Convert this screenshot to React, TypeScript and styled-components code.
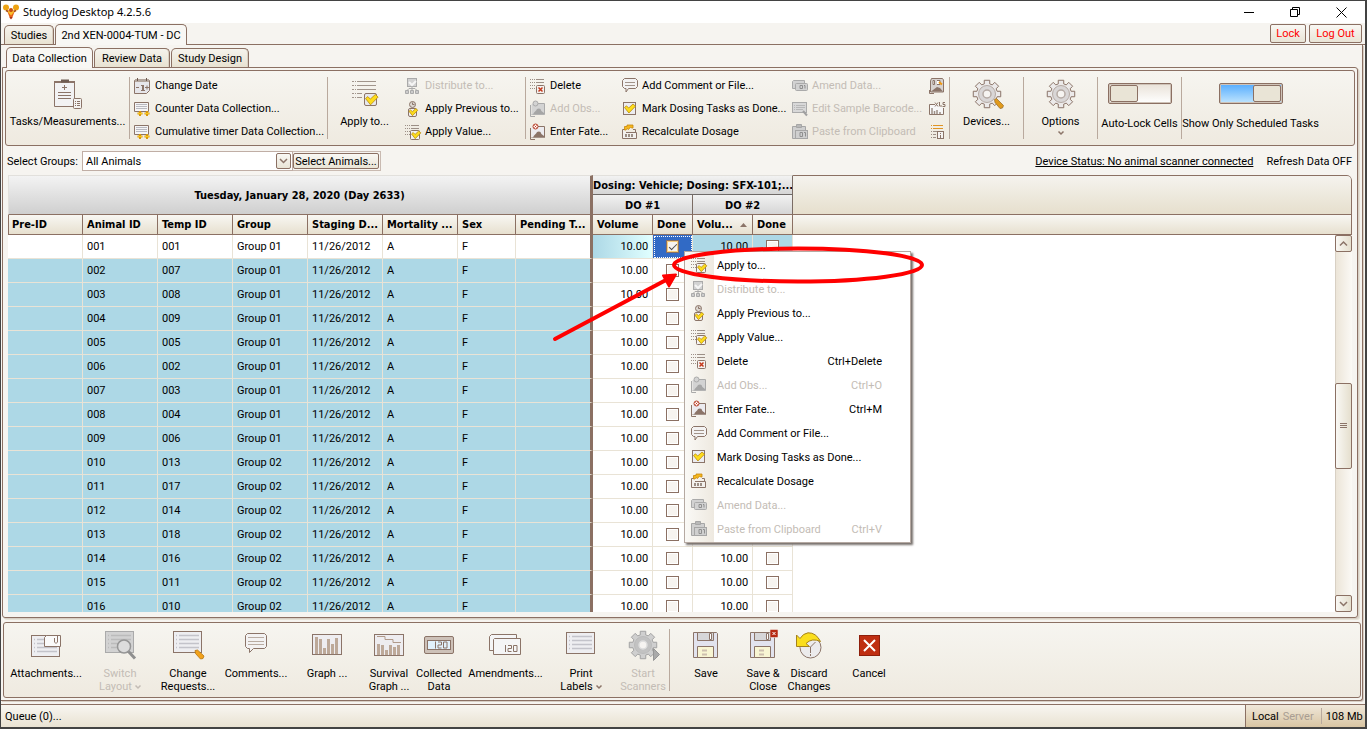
import React from "react";
import styled, { createGlobalStyle, css } from "styled-components";

const BROWN = "#8b7063";
const LINE = "#b9a99d";
const MUTED = "#c3bcb5";
const FONT = '"DejaVu Sans Condensed", "DejaVu Sans", sans-serif';
const UI = 'Roboto, "Liberation Sans", sans-serif';

const GlobalStyle = createGlobalStyle`
  *, *::before, *::after { box-sizing: border-box; }
  body { margin: 0; background: #f6f4f0; font: 11px/13px ${UI}; color: #000; }
  button, select, input { font: inherit; color: inherit; margin: 0; padding: 0; }
  button { border: 0; background: none; white-space: nowrap; }
  svg { display: block; flex: none; overflow: visible; }
`;

/* ---------- window chrome ---------- */
const Window = styled.div`
  display: flex;
  flex-direction: column;
  height: 100vh;
  border: solid #434343;
  border-width: 1px 2px 2px 1px;
  background: #f6f4f0;
  overflow: hidden;
`;
const TitleBar = styled.header`
  display: flex;
  align-items: center;
  height: 22px;
  flex: none;
  padding: 0 1px 0 2px;
  gap: 4px;
  background: #fff;
  font: 11px/16px "Noto Sans", "Open Sans", sans-serif;
`;
const AppTitle = styled.h1`
  flex: 1;
  margin: 0;
  font: inherit;
`;
const WindowControls = styled.div`
  display: flex;
`;
const WindowButton = styled.button`
  display: flex;
  align-items: center;
  justify-content: center;
  width: 46px;
  height: 20px;
`;
const TabRow = styled.nav<{ $inner?: boolean }>`
  display: flex;
  align-items: flex-end;
  flex: none;
  gap: 1px;
  height: 22px;
  padding: 0 3px;
  border-bottom: ${(p) => (p.$inner ? "0" : `1px solid ${BROWN}`)};
  ${(p) => p.$inner && css`padding-left: 5px;`}
`;
const Tab = styled.button<{ $active?: boolean; $w: number }>`
  position: relative;
  z-index: 1;
  width: ${(p) => p.$w}px;
  height: ${(p) => (p.$active ? 21 : 19)}px;
  margin-bottom: ${(p) => (p.$active ? -1 : 0)}px;
  border: 1px solid ${BROWN};
  border-bottom: 0;
  border-radius: 5px 5px 0 0;
  background: ${(p) => (p.$active ? "#f8f7f4" : "linear-gradient(#f5f3ed, #e8e2d2)")};
  box-shadow: ${(p) => (p.$active ? "none" : "inset -1px 0 0 #d9d0c2")};
`;
const SessionButtons = styled.div`
  display: flex;
  gap: 3px;
  margin-left: auto;
  padding-bottom: 1px;
`;
const FramedButton = styled.button<{ $w: number; $red?: boolean }>`
  width: ${(p) => p.$w}px;
  height: ${(p) => (p.$red ? 19 : 16)}px;
  border: 1px solid ${BROWN};
  border-radius: 2px;
  background: linear-gradient(#f9f8f4, #e9e4d6);
  color: ${(p) => (p.$red ? "#f00" : "#000")};
`;
const OuterFrame = styled.main`
  display: flex;
  flex-direction: column;
  flex: 1;
  min-height: 0;
  margin-right: 2px;
  border: solid ${BROWN};
  border-width: 0 1px 1px 0;
  border-radius: 0 0 3px 0;
  box-shadow: 1px 1px 0 #d8cfc5;
`;
const InnerFrame = styled.section`
  display: flex;
  flex-direction: column;
  flex: 1;
  min-height: 0;
  margin: 0 4px 0 1px;
  padding: 2px;
  border: 1px solid ${BROWN};
  border-radius: 0 3px 3px 3px;
  box-shadow: 1px 1px 0 #d8cfc5, 2px 2px 0 #e6e2d6;
`;
const panel = css`
  display: flex;
  flex: none;
  height: 76px;
  border: 1px solid ${BROWN};
  border-radius: 3px;
  background: linear-gradient(#f6f5f0, #efeae0);
  overflow: hidden;
`;
const Ribbon = styled.div`${panel}`;
const ActionBar = styled.div`
  ${panel}
  margin: 4px 1px 2px 2px;
`;
const Separator = styled.div`
  flex: none;
  width: 1px;
  margin: 6px 0;
  background: ${LINE};
`;

/* ---------- ribbon ---------- */
const CommandList = styled.div<{ $w: number }>`
  flex: none;
  width: ${(p) => p.$w}px;
  padding: 3px 0 0 4px;
`;
const Command = styled.button`
  display: flex;
  align-items: center;
  gap: 4px;
  height: 23px;
  &:disabled { color: ${MUTED}; }
`;
const BigCommand = styled.button<{ $w: number; $top: number }>`
  display: flex;
  flex-direction: column;
  align-items: center;
  flex: none;
  width: ${(p) => p.$w}px;
  padding-top: ${(p) => p.$top}px;
  &:disabled { color: ${MUTED}; }
`;
const IconBox = styled.span<{ $h: number }>`
  display: flex;
  align-items: center;
  justify-content: center;
  flex: none;
  height: ${(p) => p.$h}px;
  padding-bottom: ${(p) => (p.$h > 20 ? 5 : 0)}px;
`;
const ToggleField = styled.label<{ $w: number }>`
  display: flex;
  flex-direction: column;
  align-items: center;
  gap: 13px;
  flex: none;
  width: ${(p) => p.$w}px;
  padding-top: 12px;
  white-space: nowrap;
`;
const Toggle = styled.input`
  appearance: none;
  display: flex;
  width: 64px;
  height: 21px;
  padding: 1px;
  border: 1px solid ${BROWN};
  border-radius: 2px;
  background: linear-gradient(#e9e2d8, #fff);
  box-shadow: inset 0 0 0 1px #cfc3b8;
  &::before {
    content: "";
    width: 28px;
    height: 17px;
    border: 1px solid ${BROWN};
    border-radius: 2px;
    background: #e9e4d6;
  }
  &:checked {
    justify-content: flex-end;
    background: linear-gradient(#56adff, #bfe4fd);
  }
`;

/* ---------- filter line ---------- */
const FilterRow = styled.div`
  display: flex;
  align-items: center;
  flex: none;
  height: 20px;
  margin-top: 5px;
  padding: 0 3px 0 2px;
`;
const FilterLabel = styled.label`
  width: 75px;
`;
const SelectBox = styled.div`
  display: grid;
  grid-template-columns: 1fr 16px;
  align-items: center;
  width: 211px;
  height: 20px;
  border: 1px solid #c0aea5;
  background: #fff;
`;
const GroupSelect = styled.select`
  grid-area: 1 / 1 / 2 / 3;
  appearance: none;
  height: 18px;
  padding-left: 3px;
  border: 0;
  background: none;
  outline: 0;
`;
const DropArrow = styled.span`
  grid-area: 1 / 2;
  display: flex;
  align-items: center;
  justify-content: center;
  width: 15px;
  height: 16px;
  border: 1px solid ${BROWN};
  border-radius: 2px;
  background: linear-gradient(#f9f8f4, #e9e4d6);
  pointer-events: none;
`;
const ButtonHalo = styled.div`
  display: flex;
  align-items: center;
  height: 20px;
  padding-right: 1px;
  border: 1px solid #c9bab1;
  border-left: 0;
`;
const DeviceLink = styled.a`
  margin-left: auto;
  margin-right: 13px;
  color: #000;
`;

/* ---------- data grid ---------- */
const GridArea = styled.div`
  position: relative;
  display: grid;
  grid-template: 60px minmax(0, 1fr) / minmax(0, 1fr) 17px;
  flex: 1;
  min-height: 0;
  margin: 4px 3px 3px;
`;
const TableClip = styled.div`
  grid-area: 1 / 1 / 3 / 3;
  overflow: hidden;
  background: #fff;
  border-radius: 0 5px 0 0;
`;
const Table = styled.table`
  width: 100%;
  table-layout: fixed;
  border-collapse: separate;
  border-spacing: 0;
`;
const bandHead = css`
  height: 20px;
  padding: 1px 0 0;
  font: bold 11px/13px ${FONT};
  white-space: nowrap;
  overflow: hidden;
`;
const DateHead = styled.th`
  ${bandHead}
  border: solid #e2e0dc;
  border-width: 1px 0 0 1px;
  border-right: 3px solid ${BROWN};
  border-bottom: 1px solid ${BROWN};
  background: linear-gradient(#f3f3f3, #cfcfcf);
`;
const BandHead = styled.th<{ $sub?: boolean }>`
  ${bandHead}
  border: 0 solid #7b6c64;
  border-right: 1px solid #7b6c64;
  border-bottom: 1px solid ${(p) => (p.$sub ? BROWN : "#6f6a68")};
  border-top: ${(p) => (p.$sub ? "0" : "1px solid #e2e0dc")};
  background: linear-gradient(#f2f2f2, #d5d5d5);
`;
const FillerHead = styled.th`
  border: 1px solid ${BROWN};
  border-left: 0;
  border-radius: 0 5px 0 0;
  background: linear-gradient(#f5f3ee, #e6dfcd);
`;
const ColumnHead = styled.th<{ $first?: boolean; $thick?: boolean }>`
  height: 20px;
  padding: 0 0 0 ${(p) => (p.$first ? 3 : 4)}px;
  border: solid ${BROWN};
  border-width: 0 ${(p) => (p.$thick ? 3 : 1)}px 1px ${(p) => (p.$first ? 1 : 0)}px;
  background: linear-gradient(#f8f7f3, #e7e0cf);
  font: bold 11px/13px ${FONT};
  text-align: left;
  white-space: nowrap;
  overflow: hidden;
`;
const HeadLabel = styled.span`
  display: flex;
  align-items: center;
  justify-content: space-between;
  padding-right: 5px;
`;
type CellTone = "white" | "blue" | "fade" | "focus";
const TONES: Record<CellTone, string> = {
  white: "#fff",
  blue: "#add8e6",
  fade: "linear-gradient(90deg, #add8e6, #e0ffff)",
  focus: "#316ac5",
};
const Cell = styled.td<{ $tone: CellTone; $align?: string; $thick?: boolean }>`
  height: 24px;
  padding: 0 4px;
  border-bottom: 1px solid #e9e3d6;
  border-right: ${(p) => (p.$thick ? `3px solid ${BROWN}` : "1px solid #e9e3d6")};
  background: ${(p) => TONES[p.$tone]};
  text-align: ${(p) => p.$align ?? "left"};
  white-space: nowrap;
  overflow: hidden;
  ${(p) => p.$tone === "focus" && css`outline: 1px dotted #fff; outline-offset: -2px;`}
`;
const CheckInput = styled.input<{ $focus?: boolean }>`
  appearance: none;
  display: flex;
  align-items: center;
  justify-content: center;
  width: 13px;
  height: 13px;
  margin: 0 auto;
  border: 1px solid ${BROWN};
  background: #f7f4f0;
  box-shadow: ${(p) => (p.$focus ? "inset 0 0 0 1px #f5cf7d" : "inset 0 0 0 1px #fff")};
  &:checked::after {
    content: "";
    width: 8px;
    height: 4px;
    border: solid #4c4a48;
    border-width: 0 0 1px 1px;
    transform: rotate(-45deg);
    margin-bottom: 2px;
  }
`;
const ScrollBar = styled.div`
  grid-area: 2 / 2;
  display: flex;
  flex-direction: column;
  border-left: 1px solid #d8d0c4;
  background: linear-gradient(90deg, #ece5d8, #fbf9f5);
`;
const ScrollButton = styled.button<{ $thumb?: boolean }>`
  display: flex;
  align-items: center;
  justify-content: center;
  flex: none;
  width: 17px;
  height: ${(p) => (p.$thumb ? 86 : 17)}px;
  margin-left: -1px;
  border: 1px solid ${BROWN};
  border-radius: 2px;
  background: linear-gradient(90deg, #f9f8f4, #e5dfce);
`;
const Track = styled.div<{ $grow: number }>`
  flex: ${(p) => p.$grow} 0 0;
`;

/* ---------- context menu ---------- */
const Menu = styled.ul`
  position: absolute;
  left: 676px;
  top: 76px;
  width: 227px;
  margin: 0;
  padding: 1px;
  list-style: none;
  border: 1px solid #b5a9a2;
  background: linear-gradient(90deg, #faf9f6, #eee9e0) left / 29px 100% no-repeat, #fff;
  box-shadow: 2px 2px 2px #77706c;
`;
const MenuItem = styled.button`
  display: grid;
  grid-template-columns: 16px 1fr auto;
  align-items: center;
  column-gap: 10px;
  width: 100%;
  height: 24px;
  padding: 0 27px 0 5px;
  text-align: left;
  &:disabled { color: ${MUTED}; }
`;
const Annotation = styled.svg`
  position: absolute;
  left: 540px;
  top: 65px;
  pointer-events: none;
`;

/* ---------- status bar ---------- */
const StatusBar = styled.footer`
  display: flex;
  align-items: center;
  flex: none;
  height: 23px;
  margin-top: 3px;
  padding-left: 4px;
  border-top: 1px solid ${BROWN};
  background: linear-gradient(#f8f6f1, #e9e2d2);
`;
const StatusModes = styled.div`
  display: flex;
  align-items: center;
  align-self: stretch;
  width: 120px;
  margin-left: auto;
  padding-left: 6px;
  gap: 4px;
  border-left: 1px solid ${BROWN};
  background: linear-gradient(#efe7d9, #d9c5a2);
  white-space: nowrap;
`;
const Faded = styled.span`
  width: 34px;
  color: #a99d92;
`;
const StatusDivider = styled.span`
  width: 1px;
  height: 16px;
  background: ${LINE};
`;

/* ---------- icons ---------- */
const S = "#8b7468";
type Off = { off?: boolean };

const Tick = ({ x, y, s = 1 }: { x: number; y: number; s?: number }) => (
  <path
    transform={`translate(${x} ${y}) scale(${s})`}
    d="M0 3.500 L2 1.800 L4.200 4 L8.500 0 L11 2.200 L4.400 9 Z"
    fill="#fddc1c"
    stroke="#b98a10"
    strokeWidth={0.8 / s}
    strokeLinejoin="round"
  />
);
const DottedLines = ({ ys, w, short = [] }: { ys: number[]; w: number; short?: number[] }) => (
  <g stroke="#9c8f86" shapeRendering="crispEdges">
    {ys.map((y) => (
      <React.Fragment key={y}>
        <path d={`M0 ${y}h1M2 ${y}h1M4 ${y}h1`} />
        {!short.includes(y) && <path d={`M6 ${y}H${w}`} />}
      </React.Fragment>
    ))}
  </g>
);
const ApplyIcon = () => (
  <svg width="16" height="16">
    <DottedLines ys={[1.5, 4.5, 7.5, 10.5]} w={14} short={[7.5, 10.5]} />
    <rect x="5.5" y="6.5" width="9" height="9" rx="1" fill="#f3f2f3" stroke={S} />
    <Tick x={6.5} y={7} s={0.85} />
  </svg>
);
const ApplyBigIcon = () => (
  <svg width="26" height="26">
    <g stroke="#a1958c" shapeRendering="crispEdges">
      {[0.5, 4.5, 8.5, 12.5, 16.5].map((y) => (
        <path key={y} d={`M0 ${y}h2M3 ${y}h1M5 ${y}${y < 10 ? "H24" : "H10"}`} />
      ))}
    </g>
    <rect x="12.5" y="12.5" width="12" height="12" rx="1.5" fill="#e7e8ec" stroke={S} />
    <Tick x={13.5} y={13.5} s={1.15} />
  </svg>
);
const DistributeIcon = () => (
  <svg width="16" height="16" stroke="#aaa" fill="#d2d2d2">
    <rect x="2.500" y="0.500" width="9" height="8" />
    <path d="M4 4l3 3 4-4" fill="none" stroke="#f5f5f5" strokeWidth="2" />
    <path d="M7 9v3M2 12.500L4 10.500h6l2 2" fill="none" />
    <path d="M.500 12.500h3v3h-3zM5.500 12.500h3v3h-3zM10.500 12.500h3v3h-3z" fill="#ccc" />
  </svg>
);
const PreviousIcon = () => (
  <svg width="16" height="16">
    <circle cx="7.500" cy="3.500" r="3" fill="#ddd8d2" stroke={S} />
    <path d="M7.500 1.500v2h2" stroke={S} fill="none" />
    <rect x="3.500" y="7.500" width="8" height="8" rx="1.500" fill="#f0eff0" stroke={S} />
    <Tick x={4} y={7.500} s={0.8} />
  </svg>
);
const DeleteIcon = () => (
  <svg width="16" height="16">
    <DottedLines ys={[1.5, 4.5, 7.5, 10.5]} w={14} short={[7.5, 10.5]} />
    <rect x="6.500" y="7.500" width="8" height="8" rx="1" fill="#f4f1ef" stroke={S} />
    <path d="M8.500 9.500l4 4m0-4l-4 4" stroke="#c5391b" strokeWidth="1.500" />
  </svg>
);
const PersonIcon = ({ off }: Off) => {
  const c = off ? "#aaa" : S;
  return (
    <svg width="16" height="16">
      <path d="M3 2.500H14.500V13.500H1.500M.500 4V15.500H5" fill="none" stroke={c} />
      <rect x="1.500" y="3" width="12.500" height="10.500" fill={off ? "#d3d3d3" : "#ecebef"} />
      <path d="M3 13.500c1-3 3-3 4-5.500q2-1 3.500 0 0 2 3.500 4v1.500z" fill={off ? "#a5a5a5" : S} />
      <circle cx="5.500" cy="2.500" r="2.500" fill={off ? "#d3d3d3" : "#fff"} stroke={off ? "#aaa" : "#b53a22"} />
      {!off && <path d="M4.500 1.500l2 2m0-2l-2 2" stroke="#c5391b" />}
    </svg>
  );
};
const CommentIcon = () => (
  <svg width="16" height="15">
    <path
      d="M2.500 .5h11l2 2v6l-2 2H6.500L4 14V10.500H2.500l-2-2v-6z"
      fill="#f3f2f2"
      stroke={S}
    />
    <path d="M3 4.500h10M3 7.500h10" stroke="#a2948a" />
  </svg>
);
const CommentsIcon = () => (
  <svg width="22" height="24">
    <path
      d="M2.500 .5h17l2 2v11l-2 2H8.500L4.500 19.500V15.500H2.500l-2-2v-11z"
      fill="#f3f2f2"
      stroke={S}
    />
    <path d="M3 4.500h16M3 8.500h16M3 11.500h16" stroke="#b9aca2" />
  </svg>
);
const MarkIcon = () => (
  <svg width="16" height="16">
    <rect x="1.500" y="1.500" width="12" height="12" fill="#ececf0" stroke={S} />
    <Tick x={2.500} y={3} s={1} />
  </svg>
);
const RecalcIcon = () => (
  <svg width="16" height="16">
    <path d="M2.500 5.500H.500v9h14v-6H4" fill="#f3f1ee" stroke={S} />
    <path d="M3 11.500h8" stroke="#9c8f86" strokeWidth="3" strokeDasharray="2 1" />
    <path d="M11 5.500h2.500v3" fill="none" stroke={S} />
    <path d="M2.500 6V2.500H5V1h6v3H9.500l-1-1-2 2.500L5 4.500 4 6z" fill="#f5b81d" stroke="#c6860d" strokeWidth=".8" />
  </svg>
);
const AmendIcon = () => (
  <svg width="16" height="16" fill="#d2d2d2" stroke="#aaa">
    <path d="M.500 3.500l1-1H12.500V10.500H.500z" />
    <rect x="3.500" y="5.500" width="12" height="7" rx="1" />
    <path d="M8 7.500h2.500v3H8zM12 7.500h1v3" fill="none" stroke="#8f8f8f" />
  </svg>
);
const BarcodeIcon = () => (
  <svg width="16" height="16" fill="#d8d8d8" stroke="#aaa">
    <rect x=".5" y="1.500" width="14" height="10" />
    <path d="M2 4.500h1M4 4.500h9M2 6.500h1M4 6.500h9M2 8.500h1M4 8.500h7" stroke="#b8b8b8" />
    <path d="M11 10l4 4.500" strokeWidth="2" stroke="#a0a0a0" />
  </svg>
);
const PasteIcon = () => (
  <svg width="16" height="16" fill="#cfcfcf" stroke="#a6a6a6">
    <path d="M.500 2.500h13v12H.500z" />
    <path d="M4.500 .500h5v3h-5z" fill="#b8b8b8" />
    <rect x="3.500" y="6.500" width="12" height="8" />
    <path d="M8 8.500h2.500v4H8zM12 8.500h1.500v4" fill="none" stroke="#8f8f8f" />
  </svg>
);
const CalendarIcon = () => (
  <svg width="17" height="16">
    <path d="M.500 2.500h15v10l-3 3H.500z" fill="#e6e6ea" stroke={S} />
    <path d="M1 1h14v3H1z" fill="#b3a69d" />
    <path d="M3.500 0v3M12.500 0v3" stroke="#6d5a50" />
    <path d="M2 9.500h3M11 9.500h4M13 7.500v4M7 7.500h1.500M7 12.500h4" stroke={S} fill="none" />
    <path d="M9 7v6" stroke={S} strokeWidth="2" />
  </svg>
);
const CounterIcon = () => (
  <svg width="17" height="16">
    <path d="M.500 1.500h14v9H.500z" fill="#f5f5f6" stroke={S} />
    <path d="M2 3.500h11M2 5.500h11M2 7.500h11" stroke="#b9b9c0" />
    <path d="M3.500 12.500h5M6 10v5M10.500 12.500h5M13 10v5" stroke="#d99a08" strokeWidth="2" />
    <path d="M4 12.500h4M11 12.500h4" stroke="#fbc81b" />
  </svg>
);
const TasksIcon = () => (
  <svg width="29" height="30">
    <path d="M1.500 2.500h20v25h-20z" fill="#f2f2f3" stroke={S} />
    <path d="M1 2h21v2H1z" fill={S} />
    <path d="M8 .5h8v3H8z" fill="#6f5c52" />
    <path d="M11.500 6v5M9 8.500h5M5 13.500h13M5 16.500h13M5 19.500h13" stroke={S} />
    <rect x="20.500" y="19.500" width="8" height="10" rx="1" fill="#f5f3f1" stroke={S} />
    <path d="M22 22.500h1M24 22.500h3M22 24.500h1M24 24.500h3M22 26.500h1M24 26.500h3" stroke={S} />
  </svg>
);
const PictureIcon = () => (
  <svg width="16" height="16">
    <path d="M2.500 .5h11l1 1.500v12h-13V3z" fill="#d8d3d0" stroke={S} />
    <path d="M2 13.500l4-3 2-1.500 3 1 3 3.500z" fill={S} />
    <path d="M4 2.500h1.500v4H4zM8 2.500h3v4H8" fill="#fff" stroke={S} />
    <path d="M10 4l3 2.500" stroke="#f09a12" strokeWidth="2" />
    <path d="M.500 12v3.500H5" fill="none" stroke={S} />
  </svg>
);
const XlsIcon = () => (
  <svg width="17" height="16">
    <path d="M6 3.500H.500v10h14V7" fill="#f7f7f8" stroke={S} />
    <path d="M3 13V7M5.500 13v-3M8 13V9M11 13v-2" stroke="#9c8f86" strokeWidth="1.500" />
    <path d="M6 1.500l3 4M9 1.500l-3 4M10.500 1v4H13M16 1.500h-2v2h2v2h-2.500" fill="none" stroke={S} />
  </svg>
);
const InfoListIcon = () => (
  <svg width="16" height="16" shapeRendering="crispEdges">
    <path d="M2 1.500h1M4 1.500h10M2 4.500h1M4 4.500h10" stroke="#df9424" />
    <path d="M2 7.500h1M4 7.500h4M2 10.500h1M4 10.500h3M2 13.500h1M4 13.500h3" stroke="#9c8f86" />
    <rect x="8.500" y="7.500" width="6" height="7" fill="#f5f3f1" stroke={S} />
    <path d="M11.500 9v1M11.500 11v3" stroke={S} />
  </svg>
);

const gearPath = (() => {
  const pts: string[] = [];
  for (let i = 0; i < 8; i++) {
    const a = (i * Math.PI) / 4 - Math.PI / 2;
    for (const [da, r] of [[-0.26, 10.5], [-0.2, 14], [0.2, 14], [0.26, 10.5]]) {
      pts.push(`${(15 + r * Math.cos(a + da)).toFixed(2)} ${(15 + r * Math.sin(a + da)).toFixed(2)}`);
    }
  }
  return `M${pts.join("L")}Z`;
})();
const GearIcon = ({ extra, off }: { extra?: "pen" | "play" } & Off) => {
  const c = off ? "#a3a3a3" : S;
  return (
    <svg width="30" height="30">
      <path d={gearPath} fill={off ? "#cfcfcf" : "#eceaea"} stroke={c} strokeLinejoin="round" />
      <circle cx="15" cy="15" r="8.500" fill={off ? "#c2c2c2" : "#d9d6d6"} stroke={off ? "#bbb" : "#b5aaa4"} />
      <circle cx="15" cy="15" r="4" fill="#f6f4f1" stroke={off ? "#ddd" : "#b5aaa4"} strokeWidth="1.500" />
      {extra === "pen" && (
        <path d="M22.500 20.500l2-1 7 7-1 2.500-2.500 .5-5-6z" fill="#e19a1b" stroke="#9d7434" strokeWidth=".8" />
      )}
      {extra === "play" && <path d="M25.500 18.500v12l6-6z" fill="#aaa" stroke="#969696" />}
    </svg>
  );
};
const Chevron = ({ up, c = S }: { up?: boolean; c?: string }) => (
  <svg width="9" height="6">
    <path d={up ? "M1 4.500L4.500 1 8 4.500" : "M1 1l3.500 3.500L8 1"} fill="none" stroke={c} strokeWidth="1.500" />
  </svg>
);
const SmallChevron = ({ c = S }: { c?: string }) => (
  <svg width="6" height="4">
    <path d="M.5 .5L3 3 5.500 .5" fill="none" stroke={c} strokeWidth="1.500" />
  </svg>
);
const Sheet = ({ off, y = 0 }: { y?: number } & Off) => (
  <g transform={`translate(0 ${y})`}>
    <rect x=".5" y=".5" width="28" height="21" fill={off ? "#d2d2d2" : "#eeeef1"} stroke={off ? "#aaa" : S} />
    <path
      d="M3 4.500h1M6 4.500h20M3 8.500h1M6 8.500h20M3 12.500h1M6 12.500h20M3 16.500h1M6 16.500h20"
      stroke={off ? "#bbb" : "#c3c3ca"}
      strokeWidth="1.500"
    />
  </g>
);
const AttachIcon = () => (
  <svg width="30" height="24">
    <Sheet y={2} />
    <path d="M13.500 4.500l2-2H29.500v11H13.500z" fill="#fafafa" stroke={S} />
    <path d="M26.500 2v7q-1.500 3-3 0V5" fill="none" stroke={S} />
  </svg>
);
const SwitchIcon = () => (
  <svg width="30" height="28">
    <Sheet off />
    <path d="M23.500 20.500l6.500 7" stroke="#8f8f8f" strokeWidth="3" />
    <circle cx="19" cy="15.500" r="6.500" fill="#dcdcdc" stroke="#969696" strokeWidth="1.500" />
  </svg>
);
const ChangeIcon = () => (
  <svg width="31" height="28">
    <Sheet />
    <path d="M22 19.500l2.500-.5 6.500 6-1 2.500-2.500 .5-5-5.500z" fill="#f2a21b" stroke="#b67510" strokeWidth=".8" />
  </svg>
);
const GraphIcon = () => (
  <svg width="30" height="22">
    <rect x=".5" y=".5" width="29" height="20" fill="#eeedf0" stroke={S} />
    <path d="M4.500 20V3M8.500 20V5M12.500 20v-6M16.500 20V5M20.500 20v-10M24.500 20V4" stroke="#bda999" strokeWidth="3" />
  </svg>
);
const SurvivalIcon = () => (
  <svg width="30" height="22">
    <rect x=".5" y=".5" width="29" height="21" fill="#eeedf0" stroke={S} />
    <path d="M3 2.500h8v3h8v3h8" fill="none" stroke="#b09a8a" />
    <path d="M4.500 21v-11M8.500 21v-10M12.500 21v-5M16.500 21v-10M20.500 21v-8M24.500 21v-10" stroke="#bda999" strokeWidth="3" />
  </svg>
);
const Digits = ({ x, y }: { x: number; y: number }) => (
  <path
    transform={`translate(${x} ${y})`}
    d="M.5 0v7M3 .5h3.500v3H3v3h3.500M8.500 .5h3.500v6H8.500z"
    fill="none"
    stroke={S}
  />
);
const CollectedIcon = () => (
  <svg width="30" height="19">
    <rect x=".5" y=".5" width="29" height="17" rx="1.500" fill="#cdc1b8" stroke={S} />
    <rect x="3.500" y="4.500" width="23" height="9" fill="#e2f1fb" stroke={S} />
    <Digits x={11} y={5.5} />
  </svg>
);
const AmendmentsIcon = () => (
  <svg width="33" height="22">
    <path d="M.500 2.500l2-2H27.500V16.500H.500z" fill="#f5f5f6" stroke={S} />
    <path d="M4.500 5.500l1-1H31.500V20.500H4.500z" fill="#f5f5f6" stroke={S} />
    <Digits x={16} y={11} />
  </svg>
);
const PrintIcon = () => (
  <svg width="30" height="27">
    <Sheet />
  </svg>
);
const SaveIcon = ({ close }: { close?: boolean }) => (
  <svg width="26" height="26">
    <path d="M.500 .500h23l1 1V25.500H.500z" fill="#e2e3ee" stroke={S} />
    <path d="M4.500 .500h16v8h-16z" fill="#d6d6d8" stroke={S} />
    <path d="M16.500 1.500h2v6h-2z" fill="#fff" stroke={S} />
    <path d="M4.500 14.500h16v11h-16z" fill="#f8f5d3" stroke={S} />
    <path d="M9 18.500h5M9 22.500h5" stroke="#cdbfb0" strokeWidth="2" />
    {close && (
      <>
        <rect x="20" y="-2.500" width="8" height="8" rx="1" fill="#b62a12" stroke="#f6f4f0" strokeWidth=".5" />
        <path d="M22.500 0l3 3m0-3l-3 3" stroke="#fff" />
      </>
    )}
  </svg>
);
const DiscardIcon = () => (
  <svg width="26" height="27">
    <circle cx="14.500" cy="15.500" r="10.500" fill="#ecebec" stroke={S} />
    <path d="M14.500 21v-6l5-5M14.500 22v2" fill="none" stroke={S} />
    <path d="M.500 3v11.500h13L10 11.500q6-6 14.500-2Q20 .500 12 .8 7 1.500 4 6.500z" fill="#fade1d" stroke="#a5821b" strokeLinejoin="round" />
  </svg>
);
const CancelIcon = () => (
  <svg width="21" height="21">
    <rect x=".5" y=".5" width="20" height="20" fill="#bf2f12" stroke="#8e1f0b" />
    <path d="M5 5l11 11M16 5L5 16" stroke="#fff" strokeWidth="2" />
  </svg>
);
const Logo = () => (
  <svg width="16" height="16">
    <path d="M4 6.500h8L9 14.500H7z" fill="#e8621a" />
    <path d="M5.500 7l2.500 3 2.500-3" fill="none" stroke="#fbc02d" strokeWidth="2" />
    <path d="M6.500 13h3l-1.500 2.500z" fill="#a8321a" />
    <circle cx="3" cy="3.500" r="3" fill="#eda312" />
    <circle cx="13" cy="3.500" r="3" fill="#eda312" />
    <circle cx="8" cy="6" r="2" fill="#c8500f" />
    <path d="M3 6.500l2 1M13 6.500l-2 1" stroke="#a14a12" strokeWidth="1.500" />
  </svg>
);

/* ---------- data ---------- */
const ROWS: [string, string, string][] = [
  ["001", "001", "01"], ["002", "007", "01"], ["003", "008", "01"], ["004", "009", "01"],
  ["005", "005", "01"], ["006", "002", "01"], ["007", "003", "01"], ["008", "004", "01"],
  ["009", "006", "01"], ["010", "013", "02"], ["011", "017", "02"], ["012", "014", "02"],
  ["013", "018", "02"], ["014", "016", "02"], ["015", "011", "02"], ["016", "010", "02"],
];
const WIDTHS = [75, 75, 75, 75, 75, 75, 58, 77, 60, 40, 60, 40];
const HEADS = [
  "Pre-ID", "Animal ID", "Temp ID", "Group", "Staging D...", "Mortality ...",
  "Sex", "Pending T...", "Volume", "Done", "Volu...", "Done",
];

type Item = { text: string; icon: React.ReactNode; off?: boolean; keys?: string };
const MENU: Item[] = [
  { text: "Apply to...", icon: <ApplyIcon /> },
  { text: "Distribute to...", icon: <DistributeIcon />, off: true },
  { text: "Apply Previous to...", icon: <PreviousIcon /> },
  { text: "Apply Value...", icon: <ApplyIcon /> },
  { text: "Delete", icon: <DeleteIcon />, keys: "Ctrl+Delete" },
  { text: "Add Obs...", icon: <PersonIcon off />, off: true, keys: "Ctrl+O" },
  { text: "Enter Fate...", icon: <PersonIcon />, keys: "Ctrl+M" },
  { text: "Add Comment or File...", icon: <CommentIcon /> },
  { text: "Mark Dosing Tasks as Done...", icon: <MarkIcon /> },
  { text: "Recalculate Dosage", icon: <RecalcIcon /> },
  { text: "Amend Data...", icon: <AmendIcon />, off: true },
  { text: "Paste from Clipboard", icon: <PasteIcon />, off: true, keys: "Ctrl+V" },
];

const Commands = ({ w, items }: { w: number; items: Item[] }) => (
  <CommandList $w={w}>
    {items.map((i, n) => (
      <Command key={n} disabled={i.off}>
        {i.icon}
        {i.text}
      </Command>
    ))}
  </CommandList>
);

const ChevronLine = styled.span`
  display: inline-flex;
  align-items: center;
  gap: 3px;
`;
const ActionButton = ({
  w, icon, lines, off, drop,
}: { w: number; icon: React.ReactNode; lines: string[]; off?: boolean; drop?: boolean }) => (
  <BigCommand $w={w} $top={5} disabled={off}>
    <IconBox $h={39}>{icon}</IconBox>
    {lines.map((l, n) => (
      <ChevronLine key={l}>
        {l}
        {drop && n === lines.length - 1 && <SmallChevron c={off ? MUTED : S} />}
      </ChevronLine>
    ))}
  </BigCommand>
);

export default function App() {
  return (
    <Window>
      <GlobalStyle />
      <TitleBar>
        <Logo />
        <AppTitle>Studylog Desktop 4.2.5.6</AppTitle>
        <WindowControls>
          <WindowButton aria-label="Minimize">
            <svg width="11" height="11"><path d="M0 5.500h10" stroke="#000" /></svg>
          </WindowButton>
          <WindowButton aria-label="Restore">
            <svg width="11" height="11" fill="none" stroke="#000">
              <path d="M.500 2.500h7v7h-7zM2.500 2.500V.500h7v7h-2" />
            </svg>
          </WindowButton>
          <WindowButton aria-label="Close">
            <svg width="11" height="11"><path d="M.5 .5l10 10m0-10l-10 10" stroke="#000" /></svg>
          </WindowButton>
        </WindowControls>
      </TitleBar>
      <TabRow>
        <Tab $w={50}>Studies</Tab>
        <Tab $w={132} $active>2nd XEN-0004-TUM - DC</Tab>
        <SessionButtons>
          <FramedButton $w={36} $red>Lock</FramedButton>
          <FramedButton $w={53} $red>Log Out</FramedButton>
        </SessionButtons>
      </TabRow>
      <OuterFrame>
        <TabRow $inner>
          <Tab $w={87} $active>Data Collection</Tab>
          <Tab $w={76}>Review Data</Tab>
          <Tab $w={78}>Study Design</Tab>
        </TabRow>
        <InnerFrame>
          <Ribbon>
            <BigCommand $w={123} $top={7}>
              <IconBox $h={37}><TasksIcon /></IconBox>
              Tasks/Measurements...
            </BigCommand>
            <Separator />
            <Commands
              w={197}
              items={[
                { text: "Change Date", icon: <CalendarIcon /> },
                { text: "Counter Data Collection...", icon: <CounterIcon /> },
                { text: "Cumulative timer Data Collection...", icon: <CounterIcon /> },
              ]}
            />
            <Separator />
            <BigCommand $w={73} $top={7}>
              <IconBox $h={37}><ApplyBigIcon /></IconBox>
              Apply to...
            </BigCommand>
            <Commands w={124} items={MENU.slice(1, 4)} />
            <Separator />
            <Commands w={92} items={MENU.slice(4, 7)} />
            <Commands w={170} items={MENU.slice(7, 10)} />
            <Commands
              w={137}
              items={[
                MENU[10],
                { text: "Edit Sample Barcode...", icon: <BarcodeIcon />, off: true },
                MENU[11],
              ]}
            />
            <Commands
              w={24}
              items={[
                { text: "", icon: <PictureIcon /> },
                { text: "", icon: <XlsIcon /> },
                { text: "", icon: <InfoListIcon /> },
              ]}
            />
            <Separator />
            <BigCommand $w={73} $top={7}>
              <IconBox $h={37}><GearIcon extra="pen" /></IconBox>
              Devices...
            </BigCommand>
            <Separator />
            <BigCommand $w={73} $top={7}>
              <IconBox $h={37}><GearIcon /></IconBox>
              Options
              <IconBox $h={9}><SmallChevron /></IconBox>
            </BigCommand>
            <Separator />
            <ToggleField $w={83}>
              <Toggle type="checkbox" role="switch" />
              Auto-Lock Cells
            </ToggleField>
            <Separator />
            <ToggleField $w={137}>
              <Toggle type="checkbox" role="switch" defaultChecked />
              Show Only Scheduled Tasks
            </ToggleField>
          </Ribbon>

          <FilterRow>
            <FilterLabel htmlFor="groups">Select Groups:</FilterLabel>
            <SelectBox>
              <GroupSelect id="groups" defaultValue="all">
                <option value="all">All Animals</option>
              </GroupSelect>
              <DropArrow><Chevron /></DropArrow>
            </SelectBox>
            <ButtonHalo>
              <FramedButton $w={86}>Select Animals...</FramedButton>
            </ButtonHalo>
            <DeviceLink href="#devices">Device Status: No animal scanner connected</DeviceLink>
            <span>Refresh Data OFF</span>
          </FilterRow>

          <GridArea>
            <TableClip>
              <Table>
                <colgroup>
                  {WIDTHS.map((w, i) => <col key={i} width={w} />)}
                  <col />
                </colgroup>
                <thead>
                  <tr>
                    <DateHead colSpan={8} rowSpan={2}>Tuesday, January 28, 2020 (Day 2633)</DateHead>
                    <BandHead colSpan={4}>Dosing: Vehicle; Dosing: SFX-101;...</BandHead>
                    <FillerHead rowSpan={2} />
                  </tr>
                  <tr>
                    <BandHead colSpan={2} $sub>DO #1</BandHead>
                    <BandHead colSpan={2} $sub>DO #2</BandHead>
                  </tr>
                  <tr>
                    {HEADS.map((h, i) => (
                      <ColumnHead key={i} $first={i === 0} $thick={i === 7}>
                        {i === 10 ? (
                          <HeadLabel>
                            {h}
                            <svg width="7" height="4"><path d="M0 4L3.500 0 7 4z" fill={S} /></svg>
                          </HeadLabel>
                        ) : h}
                      </ColumnHead>
                    ))}
                    <ColumnHead />
                  </tr>
                </thead>
                <tbody>
                  {ROWS.map(([id, temp, group], r) => {
                    const tone: CellTone = r === 0 ? "white" : "blue";
                    const dose: CellTone = r === 0 ? "blue" : "white";
                    return (
                      <tr key={id}>
                        <Cell $tone={tone} />
                        <Cell $tone={tone}>{id}</Cell>
                        <Cell $tone={tone}>{temp}</Cell>
                        <Cell $tone={tone}>Group {group}</Cell>
                        <Cell $tone={tone}>11/26/2012</Cell>
                        <Cell $tone={tone}>A</Cell>
                        <Cell $tone={tone}>F</Cell>
                        <Cell $tone={tone} $thick />
                        <Cell $tone={r === 0 ? "fade" : "white"} $align="right">10.00</Cell>
                        <Cell $tone={r === 0 ? "focus" : "white"}>
                          <CheckInput
                            type="checkbox"
                            aria-label={`DO #1 done, animal ${id}`}
                            defaultChecked={r === 0}
                            $focus={r === 0}
                          />
                        </Cell>
                        <Cell $tone={dose} $align="right">10.00</Cell>
                        <Cell $tone={dose}>
                          <CheckInput type="checkbox" aria-label={`DO #2 done, animal ${id}`} />
                        </Cell>
                      </tr>
                    );
                  })}
                </tbody>
              </Table>
            </TableClip>
            <ScrollBar>
              <ScrollButton aria-label="Scroll up"><Chevron up /></ScrollButton>
              <Track $grow={131} />
              <ScrollButton $thumb aria-label="Scroll position">
                <svg width="7" height="6"><path d="M0 .5h7M0 2.500h7M0 4.500h7" stroke={S} /></svg>
              </ScrollButton>
              <Track $grow={126} />
              <ScrollButton aria-label="Scroll down"><Chevron /></ScrollButton>
            </ScrollBar>
            <Menu>
              {MENU.map((m) => (
                <li key={m.text}>
                  <MenuItem disabled={m.off}>
                    {m.icon}
                    <span>{m.text}</span>
                    <span>{m.keys}</span>
                  </MenuItem>
                </li>
              ))}
            </Menu>
            <Annotation width="390" height="110">
              <ellipse cx="250" cy="25" rx="124" ry="16.500" fill="none" stroke="#f00" strokeWidth="4" />
              <path d="M7 99L118 40" stroke="#f00" strokeWidth="4" strokeLinecap="round" />
              <path d="M128 34.500L115 35.500 121 46.500z" fill="#f00" stroke="#f00" strokeWidth="2" strokeLinejoin="round" />
            </Annotation>
          </GridArea>
        </InnerFrame>

        <ActionBar>
          <ActionButton w={84} icon={<AttachIcon />} lines={["Attachments..."]} />
          <ActionButton w={64} icon={<SwitchIcon />} lines={["Switch", "Layout"]} off drop />
          <ActionButton w={72} icon={<ChangeIcon />} lines={["Change", "Requests..."]} />
          <ActionButton w={64} icon={<CommentsIcon />} lines={["Comments..."]} />
          <ActionButton w={78} icon={<GraphIcon />} lines={["Graph ..."]} />
          <ActionButton w={46} icon={<SurvivalIcon />} lines={["Survival", "Graph ..."]} />
          <ActionButton w={54} icon={<CollectedIcon />} lines={["Collected", "Data"]} />
          <ActionButton w={79} icon={<AmendmentsIcon />} lines={["Amendments..."]} />
          <ActionButton w={72} icon={<PrintIcon />} lines={["Print", "Labels"]} drop />
          <ActionButton w={52} icon={<GearIcon off extra="play" />} lines={["Start", "Scanners"]} off />
          <Separator />
          <ActionButton w={72} icon={<SaveIcon />} lines={["Save"]} />
          <ActionButton w={42} icon={<SaveIcon close />} lines={["Save &", "Close"]} />
          <ActionButton w={50} icon={<DiscardIcon />} lines={["Discard", "Changes"]} />
          <ActionButton w={70} icon={<CancelIcon />} lines={["Cancel"]} />
        </ActionBar>
      </OuterFrame>
      <StatusBar>
        Queue (0)...
        <StatusModes>
          <span>Local</span>
          <Faded>Server</Faded>
          <StatusDivider />
          <span>108 Mb</span>
        </StatusModes>
      </StatusBar>
    </Window>
  );
}
